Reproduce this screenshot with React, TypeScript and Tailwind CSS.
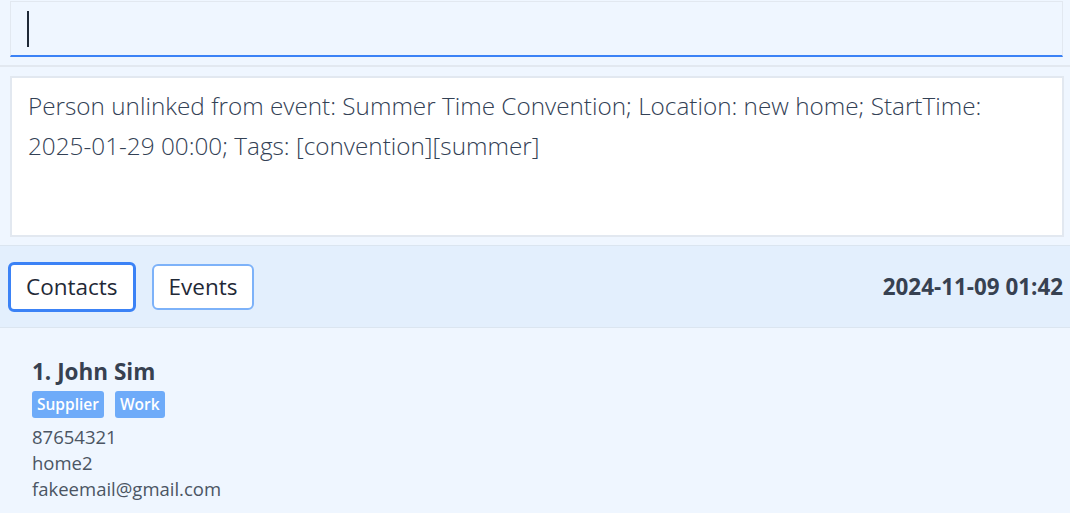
import React from "react";

export default function App() {
  return (
    <div className="w-[1070px] h-[513px] overflow-hidden bg-[#eff6ff] flex flex-col" style={{ fontFamily: '"Open Sans", "Noto Sans", sans-serif' }}>
      <div className="pl-[10px] pr-[7px] pt-[1px] pb-[8px]">
        <div className="h-[56px] border border-[#e2e8f0] border-b-2 border-b-[#3b82f6] bg-[#eff6ff] flex items-center pl-[16px]">
          <div className="w-[2px] h-[36px] bg-[#1f2937]" />
        </div>
      </div>
      <div className="h-[2px] bg-[#e2e8f0]" />
      <div className="pl-[10px] pr-[6px] pt-[9px] pb-[8px]">
        <div className="h-[161px] bg-white border-2 border-[#e2e8f0] pl-[16px] pr-[50px] pt-[8px] text-[24.3px] leading-[40px] font-light text-[#334155]">
          Person unlinked from event: Summer Time Convention; Location: new home; StartTime: 2025-01-29 00:00; Tags: [convention][summer]
        </div>
      </div>
      <div className="h-[1px] bg-[#dbe5f0]" />
      <div className="h-[81px] bg-[#e3effd] flex items-center pl-[8px] pr-[7px]">
        <button className="h-[50px] px-[15px] border-[3px] border-[#3b82f6] rounded-[6px] bg-white text-[22.5px] text-[#1f2937]">Contacts</button>
        <button className="ml-[16px] h-[46px] px-[15px] border-2 border-[#7db2f9] rounded-[6px] bg-white text-[22.5px] text-[#1f2937]">Events</button>
        <div className="ml-auto text-[22.4px] font-bold text-[#374151]">2024-11-09 01:42</div>
      </div>
      <div className="h-[1px] bg-[#dbe5f0]" />
      <div className="px-[32px] pt-[29px]">
        <div className="text-[22.5px] font-bold text-[#374151] leading-[30px]">1. John Sim</div>
        <div className="flex gap-[11px] mt-[4px]">
          <span className="h-[27px] px-[5px] rounded-[3px] bg-[#6eabf9] text-white font-semibold text-[15.5px] leading-[27px]">Supplier</span>
          <span className="h-[27px] px-[5px] rounded-[3px] bg-[#6eabf9] text-white font-semibold text-[15.5px] leading-[27px]">Work</span>
        </div>
        <div className="mt-[6px] text-[18.5px] leading-[26px] text-[#4b5563]">
          <div>87654321</div>
          <div>home2</div>
          <div>fakeemail@gmail.com</div>
        </div>
      </div>
    </div>
  );
}
